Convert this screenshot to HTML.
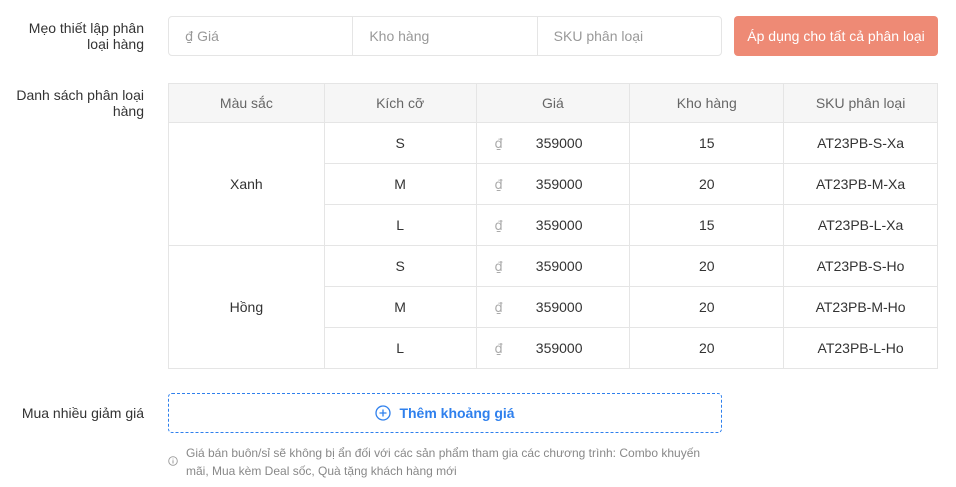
<!DOCTYPE html>
<html><head><meta charset="utf-8"><style>
*{box-sizing:border-box;margin:0;padding:0}
body{width:956px;height:487px;background:#fff;font-family:"Liberation Sans","Noto Sans CJK SC",sans-serif;font-size:14px;color:#333;position:relative;overflow:hidden}
.lbl{position:absolute;left:10px;text-align:right;font-size:14px;color:#333;line-height:16px;width:134px}
.inp{position:absolute;left:168px;top:16px;width:554px;height:40px;border:1px solid #e5e5e5;border-radius:4px;display:flex}
.inp div{flex:1;border-right:1px solid #e5e5e5;color:#999;padding-left:16px;line-height:38px}
.inp div:last-child{border-right:none}
.d{font-family:"DejaVu Sans",sans-serif;font-size:13px}
.btn{position:absolute;left:734px;top:16px;width:204px;height:40px;background:#ee8a75;color:#fff;border-radius:4px;text-align:center;line-height:40px;font-size:14px}
table{position:absolute;left:168px;top:83px;border-collapse:collapse;width:770px;font-size:14px}
td,th{border:1px solid #e5e5e5;height:41px;text-align:center;color:#333;font-weight:normal}
th{background:#f6f6f6;color:#666;height:39px}
td.p{text-align:left;padding-left:18px}
td.p span{color:#aaa;margin-right:33px}
.add{position:absolute;left:168px;top:393px;width:554px;height:40px;border:1px dashed #2f80ed;border-radius:4px;color:#2f80ed;font-weight:bold;text-align:center;line-height:38px;font-size:14px}
.note{position:absolute;left:186px;top:444px;width:540px;font-size:12px;color:#888;line-height:18px}
</style></head><body>
<div class="lbl" style="top:20px">Mẹo thiết lập phân loại hàng</div>
<div class="inp"><div><span class="d">₫</span> Giá</div><div>Kho hàng</div><div>SKU phân loại</div></div>
<div class="btn">Áp dụng cho tất cả phân loại</div>
<div class="lbl" style="top:87px">Danh sách phân loại hàng</div>
<table>
<colgroup><col style="width:156px"><col style="width:152px"><col style="width:154px"><col style="width:154px"><col style="width:154px"></colgroup>
<tr><th>Màu sắc</th><th>Kích cỡ</th><th>Giá</th><th>Kho hàng</th><th>SKU phân loại</th></tr>
<tr><td rowspan="3">Xanh</td><td>S</td><td class="p"><span class="d">₫</span>359000</td><td>15</td><td>AT23PB-S-Xa</td></tr>
<tr><td>M</td><td class="p"><span class="d">₫</span>359000</td><td>20</td><td>AT23PB-M-Xa</td></tr>
<tr><td>L</td><td class="p"><span class="d">₫</span>359000</td><td>15</td><td>AT23PB-L-Xa</td></tr>
<tr><td rowspan="3">Hồng</td><td>S</td><td class="p"><span class="d">₫</span>359000</td><td>20</td><td>AT23PB-S-Ho</td></tr>
<tr><td>M</td><td class="p"><span class="d">₫</span>359000</td><td>20</td><td>AT23PB-M-Ho</td></tr>
<tr><td>L</td><td class="p"><span class="d">₫</span>359000</td><td>20</td><td>AT23PB-L-Ho</td></tr>
</table>
<div class="lbl" style="top:405px">Mua nhiều giảm giá</div>
<div class="add"><svg width="16" height="16" viewBox="0 0 16 16" style="vertical-align:-3px;margin-right:8px"><circle cx="8" cy="8" r="7" fill="none" stroke="#2f80ed" stroke-width="1.3"/><path d="M8 4.5v7M4.5 8h7" stroke="#2f80ed" stroke-width="1.3"/></svg>Thêm khoảng giá</div>
<svg style="position:absolute;left:168px;top:456px" width="10" height="10" viewBox="0 0 10 10"><circle cx="5" cy="5" r="4.3" fill="none" stroke="#999" stroke-width="0.9"/><path d="M5 4.2v3.3M5 2.6v.8" stroke="#999" stroke-width="1"/></svg>
<div class="note">Giá bán buôn/sỉ sẽ không bị ẩn đối với các sản phẩm tham gia các chương trình: Combo khuyến mãi, Mua kèm Deal sốc, Quà tặng khách hàng mới</div>
</body></html>
